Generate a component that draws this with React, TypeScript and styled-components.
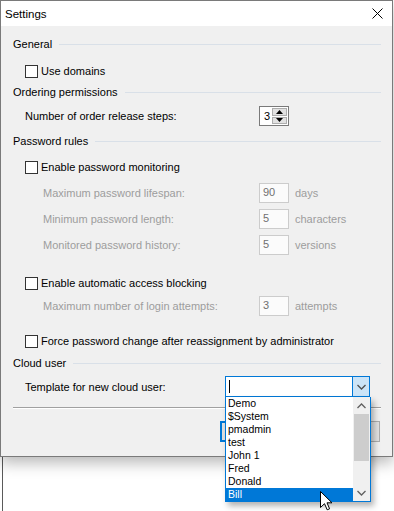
import React from "react"
import styled, { createGlobalStyle } from "styled-components"

const GlobalStyle = createGlobalStyle`
  html, body {
    margin: 0;
    padding: 0;
    background: #ffffff;
    overflow: hidden;
  }
`

const UI_FONT = `"Liberation Sans", Arial, sans-serif`

const Screen = styled.div`
  position: relative;
  width: 394px;
  height: 511px;
  display: flex;
  flex-direction: column;
  background: #ffffff;
  font-family: ${UI_FONT};
  font-size: 11px;
  color: #000000;
  overflow: hidden;
`

const Dialog = styled.div`
  position: relative;
  z-index: 1;
  width: 391px;
  border: 1px solid #7a7a7a;
  background: #f0f0f0;
  box-shadow: 0 6px 14px rgba(0, 0, 0, 0.28);
`

const TitleBar = styled.div`
  height: 25px;
  display: flex;
  align-items: center;
  justify-content: space-between;
  padding-left: 4px;
  padding-right: 9px;
  background: #ffffff;
`

const TitleText = styled.span`
  font-size: 11.5px;
  line-height: 16px;
`

const Body = styled.div`
  display: flex;
  flex-direction: column;
  padding: 10px 11px 14px 12px;
`

const GroupHeader = styled.div<{ $top: number }>`
  display: flex;
  align-items: center;
  height: 16px;
  margin-top: ${(p) => p.$top}px;
`

const HeaderRule = styled.div`
  flex: 1;
  height: 1px;
  margin-left: 7px;
  background: #d9e0e8;
`

const CheckRow = styled.label<{ $top: number }>`
  display: flex;
  align-items: center;
  height: 16px;
  margin-top: ${(p) => p.$top}px;
  padding-left: 12px;
`

const CheckBox = styled.span`
  width: 11px;
  height: 11px;
  border: 1px solid #333333;
  background: #ffffff;
  margin-right: 3px;
`

const FieldRow = styled.div<{ $top: number }>`
  display: grid;
  grid-template-columns: 246px 30px auto;
  align-items: center;
  height: 20px;
  margin-top: ${(p) => p.$top}px;
`

const FieldLabel = styled.span<{ $indent: number; $disabled?: boolean }>`
  padding-left: ${(p) => p.$indent}px;
  color: ${(p) => (p.$disabled ? "#9d9d9d" : "#000000")};
  white-space: nowrap;
`

const NumberBox = styled.div`
  box-sizing: border-box;
  height: 20px;
  border: 1px solid #cccccc;
  background: #fbfbfb;
  color: #707070;
  padding-left: 3px;
  line-height: 17px;
`

const Unit = styled.span`
  margin-left: 6px;
  color: #9d9d9d;
`

const Spinner = styled.div`
  box-sizing: border-box;
  height: 20px;
  display: flex;
  align-items: stretch;
  border: 1px solid #7a7a7a;
  background: #ffffff;
  padding: 1px;
`

const SpinValue = styled.span`
  flex: 1;
  padding-left: 3px;
  line-height: 16px;
`

const SpinButtons = styled.div`
  width: 15px;
  display: flex;
  flex-direction: column;
  gap: 1px;
`

const SpinButton = styled.div`
  flex: 1;
  display: flex;
  align-items: center;
  justify-content: center;
  border: 1px solid #adadad;
  background: #e1e1e1;
`

const TemplateRow = styled.div<{ $top: number }>`
  display: flex;
  align-items: center;
  height: 21px;
  margin-top: ${(p) => p.$top}px;
`

const TemplateLabel = styled.span`
  width: 200px;
  padding-left: 12px;
`

const ComboWrap = styled.div`
  position: relative;
  z-index: 3;
  width: 145px;
  height: 21px;
`

const Combo = styled.div`
  box-sizing: border-box;
  height: 100%;
  display: flex;
  border: 1px solid #0078d7;
  background: #ffffff;
`

const ComboText = styled.div`
  flex: 1;
  display: flex;
  align-items: center;
  padding-left: 3px;
`

const Caret = styled.span`
  width: 1px;
  height: 13px;
  background: #000000;
`

const ComboButton = styled.div`
  width: 16px;
  display: flex;
  align-items: center;
  justify-content: center;
  border-left: 1px solid #0078d7;
  background: #cce4f7;
`

const DropList = styled.div`
  position: absolute;
  top: 100%;
  left: 0;
  width: 146px;
  height: 105px;
  box-sizing: border-box;
  display: flex;
  border: 1px solid #0078d7;
  border-top: none;
  background: #ffffff;
  box-shadow: 3px 4px 6px rgba(0, 0, 0, 0.3);
`

const Items = styled.ul`
  flex: 1;
  margin: 0;
  padding: 0;
  list-style: none;
`

const Item = styled.li<{ $selected?: boolean }>`
  height: 13px;
  line-height: 13px;
  font-size: 10.5px;
  padding-left: 2px;
  background: ${(p) => (p.$selected ? "#0078d7" : "transparent")};
  color: ${(p) => (p.$selected ? "#ffffff" : "#000000")};
  white-space: nowrap;
`

const ScrollBar = styled.div`
  width: 17px;
  display: flex;
  flex-direction: column;
  background: #f0f0f0;
`

const ScrollArrow = styled.div`
  height: 17px;
  display: flex;
  align-items: center;
  justify-content: center;
`

const ScrollTrack = styled.div`
  flex: 1;
  display: flex;
  flex-direction: column;
  padding: 0 1px;
`

const ScrollThumb = styled.div`
  height: 47px;
  background: #cdcdcd;
`

const Separator = styled.div<{ $top: number }>`
  height: 0;
  margin-top: ${(p) => p.$top}px;
  border-top: 1px solid #a0a0a0;
  border-bottom: 1px solid #ffffff;
`

const ButtonRow = styled.div<{ $top: number }>`
  display: flex;
  justify-content: flex-end;
  gap: 10px;
  margin-top: ${(p) => p.$top}px;
  padding-right: 1px;
`

const DialogButton = styled.div<{ $default?: boolean }>`
  box-sizing: border-box;
  width: 75px;
  height: 21px;
  background: #e1e1e1;
  border: ${(p) => (p.$default ? "2px solid #0078d7" : "1px solid #adadad")};
`

const BackWindow = styled.div`
  flex: 1;
  margin-left: 2px;
  border-left: 1px solid #5a5a5a;
`

const Pointer = styled.svg`
  position: absolute;
  left: 320px;
  top: 491px;
  z-index: 5;
`

function Chevron({ up, color = "#606060" }: { up?: boolean; color?: string }) {
  return (
    <svg width="9" height="6" viewBox="0 0 9 6">
      <path
        d={up ? "M0.5 5 L4.5 1 L8.5 5" : "M0.5 1 L4.5 5 L8.5 1"}
        fill="none"
        stroke={color}
        strokeWidth="1.3"
      />
    </svg>
  )
}

function Triangle({ up }: { up?: boolean }) {
  return (
    <svg width="7" height="4" viewBox="0 0 7 4">
      <path d={up ? "M0 4 L3.5 0 L7 4 Z" : "M0 0 L3.5 4 L7 0 Z"} fill="#000000" />
    </svg>
  )
}

const users = ["Demo", "$System", "pmadmin", "test", "John 1", "Fred", "Donald", "Bill"]

export default function App() {
  return (
    <Screen>
      <GlobalStyle />
      <Dialog>
        <TitleBar>
          <TitleText>Settings</TitleText>
          <svg width="11" height="11" viewBox="0 0 11 11">
            <path d="M0.5 0.5 L10.5 10.5 M10.5 0.5 L0.5 10.5" stroke="#000000" strokeWidth="1" />
          </svg>
        </TitleBar>
        <Body>
          <GroupHeader $top={0}>
            General
            <HeaderRule />
          </GroupHeader>
          <CheckRow $top={11}>
            <CheckBox />
            Use domains
          </CheckRow>

          <GroupHeader $top={5}>
            Ordering permissions
            <HeaderRule />
          </GroupHeader>
          <FieldRow $top={6}>
            <FieldLabel $indent={12}>Number of order release steps:</FieldLabel>
            <Spinner>
              <SpinValue>3</SpinValue>
              <SpinButtons>
                <SpinButton>
                  <Triangle up />
                </SpinButton>
                <SpinButton>
                  <Triangle />
                </SpinButton>
              </SpinButtons>
            </Spinner>
          </FieldRow>

          <GroupHeader $top={7}>
            Password rules
            <HeaderRule />
          </GroupHeader>
          <CheckRow $top={10}>
            <CheckBox />
            Enable password monitoring
          </CheckRow>
          <FieldRow $top={8}>
            <FieldLabel $indent={30} $disabled>Maximum password lifespan:</FieldLabel>
            <NumberBox>90</NumberBox>
            <Unit>days</Unit>
          </FieldRow>
          <FieldRow $top={6}>
            <FieldLabel $indent={30} $disabled>Minimum password length:</FieldLabel>
            <NumberBox>5</NumberBox>
            <Unit>characters</Unit>
          </FieldRow>
          <FieldRow $top={6}>
            <FieldLabel $indent={30} $disabled>Monitored password history:</FieldLabel>
            <NumberBox>5</NumberBox>
            <Unit>versions</Unit>
          </FieldRow>
          <CheckRow $top={20}>
            <CheckBox />
            Enable automatic access blocking
          </CheckRow>
          <FieldRow $top={5}>
            <FieldLabel $indent={30} $disabled>Maximum number of login attempts:</FieldLabel>
            <NumberBox>3</NumberBox>
            <Unit>attempts</Unit>
          </FieldRow>
          <CheckRow $top={17}>
            <CheckBox />
            Force password change after reassignment by administrator
          </CheckRow>

          <GroupHeader $top={6}>
            Cloud user
            <HeaderRule />
          </GroupHeader>
          <TemplateRow $top={5}>
            <TemplateLabel>Template for new cloud user:</TemplateLabel>
            <ComboWrap>
              <Combo>
                <ComboText>
                  <Caret />
                </ComboText>
                <ComboButton>
                  <Chevron color="#505050" />
                </ComboButton>
              </Combo>
              <DropList>
                <Items>
                  {users.map((u) => (
                    <Item key={u} $selected={u === "Bill"}>
                      {u}
                    </Item>
                  ))}
                </Items>
                <ScrollBar>
                  <ScrollArrow>
                    <Chevron up />
                  </ScrollArrow>
                  <ScrollTrack>
                    <ScrollThumb />
                  </ScrollTrack>
                  <ScrollArrow>
                    <Chevron />
                  </ScrollArrow>
                </ScrollBar>
              </DropList>
            </ComboWrap>
          </TemplateRow>

          <Separator $top={10} />
          {/* OK / Cancel sit behind the open dropdown; only their edges show */}
          <ButtonRow $top={12}>
            <DialogButton $default />
            <DialogButton />
          </ButtonRow>
        </Body>
      </Dialog>
      <BackWindow />
      <Pointer width="13" height="20" viewBox="0 0 13 20">
        <path
          d="M0.5 0.5 L0.5 16.5 L4.5 12.7 L7.2 18.8 L9.6 17.8 L7 11.8 L12 11.8 Z"
          fill="#ffffff"
          stroke="#000000"
          strokeWidth="1"
          strokeLinejoin="miter"
        />
      </Pointer>
    </Screen>
  )
}
